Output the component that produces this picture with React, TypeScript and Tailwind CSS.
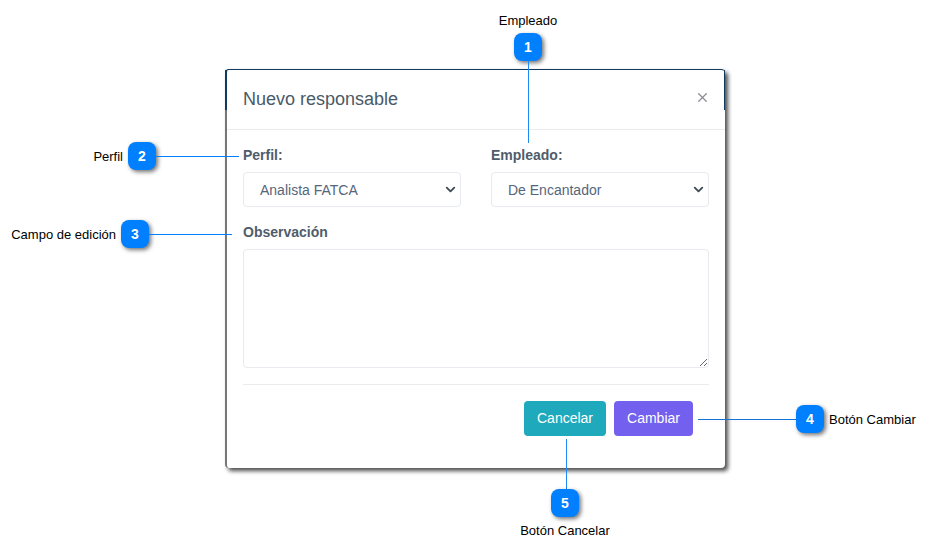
import React from 'react';
import { ChevronDown, X } from 'lucide-react';

const Badge = ({ n }: { n: number }) => (
    <div className="w-7 h-7 shrink-0 rounded-lg bg-[#0080ff] text-white text-sm font-bold flex items-center justify-center shadow-[2px_2px_4px_rgba(0,0,0,0.55)]">
        {n}
    </div>
);

const Caption = ({ children }: { children: React.ReactNode }) => (
    <span className="block h-4 shrink-0 text-[13px] leading-4 whitespace-nowrap">{children}</span>
);

const SelectBox = ({ value }: { value: string }) => (
    <div className="h-[35px] border border-[#e8ebef] rounded flex items-center justify-between pl-4 pr-[2px] text-sm text-[#55667b]">
        <span>{value}</span>
        <ChevronDown className="w-[15px] h-[15px] text-[#3f4b59]" strokeWidth={3} />
    </div>
);

const FieldLabel = ({ children }: { children: React.ReactNode }) => (
    <label className="block text-sm font-bold text-[#4f5d6b] mb-[7px]">{children}</label>
);

export default function App() {
    return (
        <div className="relative w-[931px] h-[554px] overflow-hidden bg-white font-['Liberation_Sans',sans-serif] text-black">
            <div className="pt-[69px] pl-[225px]">
                <div className="relative w-[500px] h-[399px] bg-white rounded border-t border-l-2 border-t-[#12395f] border-l-[#777777] shadow-[3px_3px_4px_rgba(0,0,0,0.7)]">
                    <div className="absolute -left-[2px] top-0 w-[2px] h-10 bg-[#12395f]" />
                    <div className="absolute right-0 top-0 w-px h-10 bg-[#12395f]" />
                    <div className="h-[60px] border-b border-[#e9ecef] px-4 flex items-center justify-between">
                        <h2 className="text-lg text-[#4a5a68] mb-[1px]">Nuevo responsable</h2>
                        <X className="w-[15px] h-[15px] mb-[5px] -mr-[1px] text-[#8a8f94]" strokeWidth={2} />
                    </div>
                    <div className="px-4">
                        <div className="grid grid-cols-2 gap-[30px] pt-[15px]">
                            <div>
                                <FieldLabel>Perfil:</FieldLabel>
                                <SelectBox value="Analista FATCA" />
                            </div>
                            <div>
                                <FieldLabel>Empleado:</FieldLabel>
                                <SelectBox value="De Encantador" />
                            </div>
                        </div>
                        <div className="mt-[15px]">
                            <FieldLabel>Observación</FieldLabel>
                        </div>
                        <textarea className="block w-full h-[119px] border border-[#e8ebef] rounded" />
                        <div className="mt-4 border-t border-[#e9ecef] pt-4 pr-4 flex justify-end gap-2">
                            <button className="w-[82px] h-[35px] pb-[2px] rounded bg-[#1fa9bc] text-white text-sm font-medium">Cancelar</button>
                            <button className="w-[79px] h-[35px] pb-[2px] rounded bg-[#7460ee] text-white text-sm font-medium">Cambiar</button>
                        </div>
                    </div>
                </div>
            </div>

            {/* callouts */}
            <div className="absolute left-[514px] top-[13px] w-7 flex flex-col items-center">
                <Caption>Empleado</Caption>
                <div className="mt-1"><Badge n={1} /></div>
                <div className="w-px h-[82px] bg-[#1e8bf5]" />
            </div>
            <div className="absolute right-[692px] top-[142px] flex items-center">
                <div className="mr-[5px] pt-[2px]"><Caption>Perfil</Caption></div>
                <Badge n={2} />
                <div className="w-[83px] h-px bg-[#0080ff]" />
            </div>
            <div className="absolute right-[699px] top-[220px] flex items-center">
                <div className="mr-[5px] pt-[2px]"><Caption>Campo de edición</Caption></div>
                <Badge n={3} />
                <div className="w-[83px] h-px bg-[#0080ff]" />
            </div>
            <div className="absolute left-[698px] top-[405px] flex items-center">
                <div className="w-[98px] h-px bg-[#1273d4]" />
                <Badge n={4} />
                <div className="ml-[5px] pt-[2px]"><Caption>Botón Cambiar</Caption></div>
            </div>
            <div className="absolute left-[551px] top-[439px] w-7 flex flex-col items-center">
                <div className="w-px h-[50px] ml-[2px] bg-[#1e8bf5]" />
                <Badge n={5} />
                <div className="mt-[6px]"><Caption>Botón Cancelar</Caption></div>
            </div>
        </div>
    );
}
